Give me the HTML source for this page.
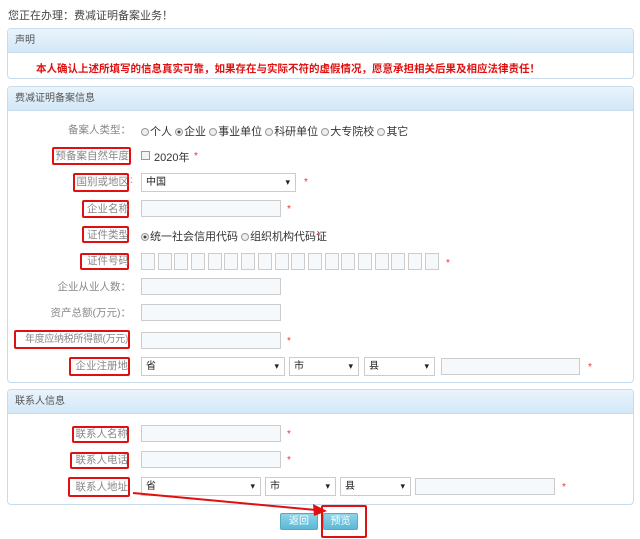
<!DOCTYPE html>
<html><head><meta charset="utf-8"><style>
*{margin:0;padding:0;box-sizing:border-box}
body{width:640px;height:539px;background:#fff;position:relative;overflow:hidden;font-family:"Liberation Sans","Noto Sans CJK SC",sans-serif;font-size:11px;color:#333}
.a{position:absolute;white-space:nowrap}
.panel{position:absolute;left:7px;width:627px;border:1px solid #c9dcec;border-radius:4px;background:#fff}
.hd{height:24px;background:linear-gradient(#eaf4fc,#d3e7f7);border-bottom:1px solid #c9dcec;border-radius:4px 4px 0 0;font-size:10px;color:#555;padding-left:7px;line-height:24px}
.lbl{position:absolute;color:#888;font-size:10.5px;line-height:14px;text-align:right;white-space:nowrap}
.rb{position:absolute;border:2px solid #e01010;border-radius:2px}
.inp{position:absolute;border:1px solid #ccc;background:#f6f9fc;height:17px}
.sel{position:absolute;border:1px solid #ccc;background:#fff;height:19px;font-size:10px;line-height:17px;padding-left:4px;color:#222}
.sel:after{content:"▾";position:absolute;right:5px;top:0;font-size:9px}
.st{position:absolute;color:#e33;font-size:10px}
.btn{position:absolute;height:17px;background:linear-gradient(#8fd3e8,#5bb8d6);border:1px solid #58a9c6;border-radius:2px;color:#fff;font-size:10px;text-align:center;line-height:15px}
.r{display:inline-block;width:8px;height:8px;border:1px solid #999;border-radius:50%;background:#eee;vertical-align:-1px;margin-right:1px}
.r.on{background:radial-gradient(#444 30%,#eee 40%)}
</style></head><body>
<div class="a" style="left:8px;top:7px;font-size:11px;color:#444">您正在办理：费减证明备案业务！</div>

<div class="panel" style="top:28px;height:51px"><div class="hd">声明</div>
<div class="a" style="left:28px;top:32px;color:#e01010;font-size:10.5px;font-weight:bold">本人确认上述所填写的信息真实可靠，如果存在与实际不符的虚假情况，愿意承担相关后果及相应法律责任！</div></div>

<div class="panel" style="top:86px;height:297px"><div class="hd">费减证明备案信息</div></div>

<div class="lbl" style="right:509px;top:123px">备案人类型：</div>
<div class="a" style="left:141px;top:123px;font-size:11px"><span class="r"></span>个人 <span class="r on"></span>企业 <span class="r"></span>事业单位 <span class="r"></span>科研单位 <span class="r"></span>大专院校 <span class="r"></span>其它</div>

<div class="rb" style="left:52px;top:147px;width:79px;height:18px"></div>
<div class="lbl" style="right:511px;top:149px">预备案自然年度</div>
<div class="a" style="left:141px;top:151px;width:9px;height:9px;border:1px solid #999;background:#f3f3f3"></div>
<div class="a" style="left:154px;top:149px">2020年</div><div class="st" style="left:194px;top:151px">*</div>

<div class="rb" style="left:73px;top:173px;width:56px;height:19px"></div>
<div class="lbl" style="right:511px;top:175px">国别或地区</div>
<div class="a" style="left:130px;top:175px;color:#888;font-size:10px">:</div>
<div class="sel" style="left:141px;top:173px;width:155px">中国</div><div class="st" style="left:304px;top:177px">*</div>

<div class="rb" style="left:82px;top:200px;width:47px;height:18px"></div>
<div class="lbl" style="right:511px;top:202px">企业名称</div>
<div class="inp" style="left:141px;top:200px;width:140px"></div><div class="st" style="left:287px;top:204px">*</div>

<div class="rb" style="left:82px;top:226px;width:47px;height:17px"></div>
<div class="lbl" style="right:511px;top:228px">证件类型</div>
<div class="a" style="left:141px;top:228px"><span class="r on"></span>统一社会信用代码 <span class="r"></span>组织机构代码证</div><div class="st" style="left:317px;top:231px">*</div>

<div class="rb" style="left:80px;top:253px;width:49px;height:17px"></div>
<div class="lbl" style="right:511px;top:254px">证件号码</div>
<div class="a" style="left:141px;top:253px;display:flex;gap:2.7px">
<i class="inp" style="position:static;width:14px;height:17px"></i><i class="inp" style="position:static;width:14px;height:17px"></i><i class="inp" style="position:static;width:14px;height:17px"></i><i class="inp" style="position:static;width:14px;height:17px"></i><i class="inp" style="position:static;width:14px;height:17px"></i><i class="inp" style="position:static;width:14px;height:17px"></i><i class="inp" style="position:static;width:14px;height:17px"></i><i class="inp" style="position:static;width:14px;height:17px"></i><i class="inp" style="position:static;width:14px;height:17px"></i><i class="inp" style="position:static;width:14px;height:17px"></i><i class="inp" style="position:static;width:14px;height:17px"></i><i class="inp" style="position:static;width:14px;height:17px"></i><i class="inp" style="position:static;width:14px;height:17px"></i><i class="inp" style="position:static;width:14px;height:17px"></i><i class="inp" style="position:static;width:14px;height:17px"></i><i class="inp" style="position:static;width:14px;height:17px"></i><i class="inp" style="position:static;width:14px;height:17px"></i><i class="inp" style="position:static;width:14px;height:17px"></i></div>
<div class="st" style="left:446px;top:258px">*</div>

<div class="lbl" style="right:509px;top:280px">企业从业人数：</div>
<div class="inp" style="left:141px;top:278px;width:140px"></div>
<div class="lbl" style="right:509px;top:306px">资产总额(万元)：</div>
<div class="inp" style="left:141px;top:304px;width:140px"></div>

<div class="rb" style="left:14px;top:330px;width:116px;height:19px"></div>
<div class="lbl" style="right:512px;top:333px;font-size:10px;letter-spacing:-0.3px">年度应纳税所得额(万元)</div>
<div class="inp" style="left:141px;top:332px;width:140px"></div><div class="st" style="left:287px;top:336px">*</div>

<div class="rb" style="left:69px;top:357px;width:61px;height:19px"></div>
<div class="lbl" style="right:512px;top:359px">企业注册地</div>
<div class="sel" style="left:141px;top:357px;width:144px">省</div>
<div class="sel" style="left:289px;top:357px;width:70px">市</div>
<div class="sel" style="left:364px;top:357px;width:71px">县</div>
<div class="inp" style="left:441px;top:358px;width:139px"></div><div class="st" style="left:588px;top:362px">*</div>

<div class="panel" style="top:389px;height:116px"><div class="hd">联系人信息</div></div>

<div class="rb" style="left:72px;top:426px;width:57px;height:17px"></div>
<div class="lbl" style="right:512px;top:427px">联系人名称</div>
<div class="inp" style="left:141px;top:425px;width:140px"></div><div class="st" style="left:287px;top:429px">*</div>
<div class="rb" style="left:70px;top:452px;width:59px;height:17px"></div>
<div class="lbl" style="right:512px;top:453px">联系人电话</div>
<div class="inp" style="left:141px;top:451px;width:140px"></div><div class="st" style="left:287px;top:455px">*</div>
<div class="rb" style="left:68px;top:477px;width:62px;height:20px"></div>
<div class="lbl" style="right:512px;top:480px">联系人地址</div>
<div class="sel" style="left:141px;top:477px;width:120px">省</div>
<div class="sel" style="left:265px;top:477px;width:71px">市</div>
<div class="sel" style="left:340px;top:477px;width:71px">县</div>
<div class="inp" style="left:415px;top:478px;width:140px"></div><div class="st" style="left:562px;top:482px">*</div>

<div class="btn" style="left:280px;top:513px;width:38px">返回</div>
<div class="btn" style="left:323px;top:513px;width:35px">预览</div>
<div class="rb" style="left:321px;top:505px;width:46px;height:33px"></div>
<svg class="a" style="left:0;top:0" width="640" height="539"><line x1="133" y1="493" x2="316" y2="510" stroke="#e01010" stroke-width="2"/><polygon points="327,511 313,504 314,516" fill="#e01010"/></svg>
</body></html>
